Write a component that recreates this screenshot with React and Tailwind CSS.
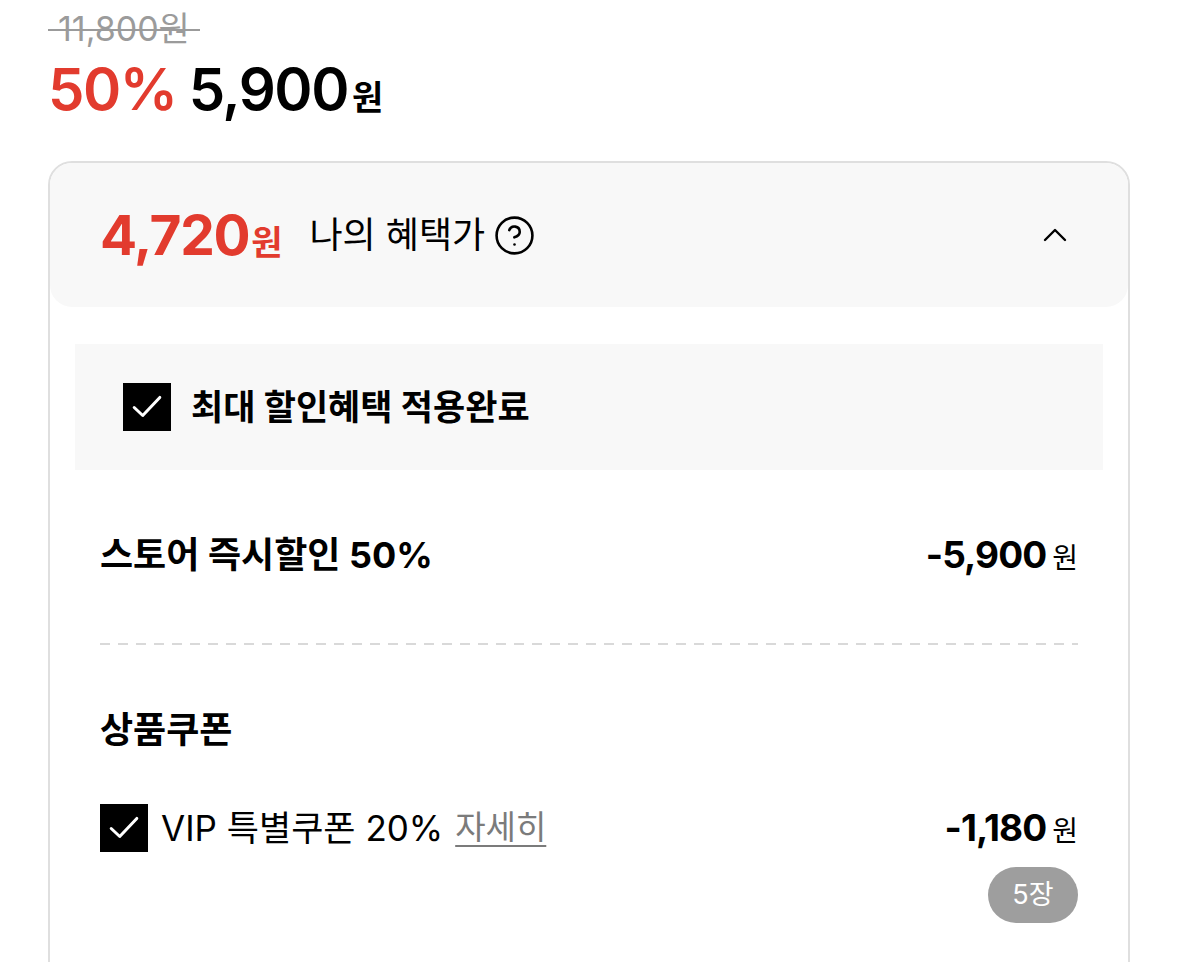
import { CircleHelp } from 'lucide-react';

function CheckBox() {
  return (
    <div className="w-[48px] h-[48px] bg-black flex items-center justify-center shrink-0">
      <svg width="32" height="32" viewBox="0 0 30 30" fill="none">
        <path d="M3 15.5 L11 23 L27 6" stroke="white" strokeWidth="2.8" strokeLinecap="round" strokeLinejoin="round" />
      </svg>
    </div>
  );
}

export default function App() {
  return (
    <div className="w-full h-[962px] overflow-hidden bg-white pl-[48px] font-['Inter','Noto_Sans_CJK_KR',sans-serif] text-black">
      <div className="pt-[9px] h-[48px] text-[34px] leading-[40px] text-[#9b9b9b]">
        <span className="relative inline-block px-[10px]">
          11,800원
          <span className="absolute left-0 right-0 top-[20px] h-[2px] bg-[#9b9b9b]" />
        </span>
      </div>

      <div className="flex items-baseline h-[84px] pt-[6px]">
        <span className="text-[58px] leading-[70px] font-semibold text-[#e23b2e] tracking-tight">50%</span>
        <span className="ml-[12px] text-[58px] leading-[70px] font-semibold tracking-tight">5,900</span>
        <span className="ml-[4px] text-[34px] font-bold">원</span>
      </div>

      <div className="mt-[29px] w-[1082px] border-2 border-[#dfdfdf] rounded-[24px] pb-[60px]">
        <div className="h-[144px] bg-[#f8f8f8] rounded-[22px] flex items-center pl-[50px] pr-[60px]">
          <div className="flex items-baseline">
            <span className="text-[55px] font-bold text-[#e23b2e] tracking-tight">4,720</span>
            <span className="ml-[2px] text-[34px] font-bold text-[#e23b2e]">원</span>
          </div>
          <span className="ml-[27px] text-[36px]">나의 혜택가</span>
          <CircleHelp className="ml-[8px]" size={43} strokeWidth={1.45} />
          <div className="flex-1" />
          <svg width="26" height="16" viewBox="0 0 26 16" fill="none">
            <path d="M3 13 L13 3 L23 13" stroke="black" strokeWidth="2.4" strokeLinecap="round" strokeLinejoin="round" />
          </svg>
        </div>

        <div className="px-[25px] pt-[37px]">
          <div className="h-[126px] bg-[#f8f8f8] flex items-center pl-[48px] gap-[20px]">
            <CheckBox />
            <span className="text-[35px] font-bold">최대 할인혜택 적용완료</span>
          </div>

          <div className="px-[25px]">
            <div className="mt-[62px] h-[46px] flex items-center justify-between">
              <span className="text-[36px] font-bold">스토어 즉시할인 50%</span>
              <div className="flex items-baseline">
                <span className="text-[37px] font-bold tracking-tight">-5,900</span>
                <span className="ml-[6px] text-[28px]">원</span>
              </div>
            </div>

            <div className="mt-[65px] h-[2px] bg-[linear-gradient(to_right,#d9d9d9_10px,transparent_10px)] bg-[length:18px_2px]" />

            <div className="mt-[62px] h-[46px] flex items-center">
              <span className="text-[36px] font-bold">상품쿠폰</span>
            </div>

            <div className="mt-[51px] h-[48px] flex items-center justify-between">
              <div className="flex items-center">
                <CheckBox />
                <span className="ml-[13px] text-[35px]">VIP 특별쿠폰 20%</span>
                <span className="ml-[12px] text-[33px] text-[#7b7b7b] underline underline-offset-[6px] decoration-2">자세히</span>
              </div>
              <div className="flex items-baseline">
                <span className="text-[37px] font-bold tracking-tight">-1,180</span>
                <span className="ml-[6px] text-[28px]">원</span>
              </div>
            </div>

            <div className="mt-[15px] flex justify-end">
              <div className="h-[56px] w-[90px] rounded-full bg-[#9e9e9e] text-white text-[27px] flex items-center justify-center">5장</div>
            </div>
          </div>
        </div>
      </div>
    </div>
  );
}
